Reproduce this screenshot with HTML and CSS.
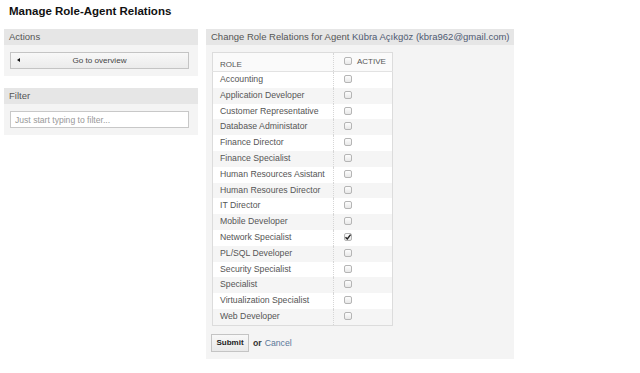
FILE: index.html
```html
<!DOCTYPE html>
<html lang="tr">
<head>
    <meta charset="UTF-8">
    <meta name="viewport" content="width=device-width, initial-scale=1.0">
    <title>Manage Role-Agent Relations</title>
    <link rel="stylesheet" href="styles.css">
</head>
<body>
    <h1 class="page-title">Manage Role-Agent Relations</h1>
    <div class="layout">
        <div class="sidebar">
            <div class="box">
                <h2 class="box-header">Actions</h2>
                <div class="box-content actions">
                    <button class="btn-overview"><span class="arrow"></span>Go to overview</button>
                </div>
            </div>
            <div class="box filter-box">
                <h2 class="box-header">Filter</h2>
                <div class="box-content filter">
                    <input type="text" class="filter-input" placeholder="Just start typing to filter...">
                </div>
            </div>
        </div>
        <div class="main box">
            <h2 class="box-header">Change Role Relations for Agent <a class="agent-link" href="#">Kübra Açıkgöz (kbra962@gmail.com)</a></h2>
            <div class="box-content main-content">
                <table class="relations">
                    <thead>
                        <tr>
                            <th class="col-role">ROLE</th>
                            <th class="col-active"><span class="check"></span>ACTIVE</th>
                        </tr>
                    </thead>
                    <tbody>
                        <tr><td>Accounting</td><td class="cell-check"><span class="check"></span></td></tr>
                        <tr><td>Application Developer</td><td class="cell-check"><span class="check"></span></td></tr>
                        <tr><td>Customer Representative</td><td class="cell-check"><span class="check"></span></td></tr>
                        <tr><td>Database Administator</td><td class="cell-check"><span class="check"></span></td></tr>
                        <tr><td>Finance Director</td><td class="cell-check"><span class="check"></span></td></tr>
                        <tr><td>Finance Specialist</td><td class="cell-check"><span class="check"></span></td></tr>
                        <tr><td>Human Resources Asistant</td><td class="cell-check"><span class="check"></span></td></tr>
                        <tr><td>Human Resoures Director</td><td class="cell-check"><span class="check"></span></td></tr>
                        <tr><td>IT Director</td><td class="cell-check"><span class="check"></span></td></tr>
                        <tr><td>Mobile Developer</td><td class="cell-check"><span class="check"></span></td></tr>
                        <tr><td>Network Specialist</td><td class="cell-check"><span class="check checked"><svg viewBox="0 0 8 8" width="8" height="8"><path d="M1.5 4.2 L3.3 6 L6.6 1.6" fill="none" stroke="#222" stroke-width="1.4"/></svg></span></td></tr>
                        <tr><td>PL/SQL Developer</td><td class="cell-check"><span class="check"></span></td></tr>
                        <tr><td>Security Specialist</td><td class="cell-check"><span class="check"></span></td></tr>
                        <tr><td>Specialist</td><td class="cell-check"><span class="check"></span></td></tr>
                        <tr><td>Virtualization Specialist</td><td class="cell-check"><span class="check"></span></td></tr>
                        <tr><td>Web Developer</td><td class="cell-check"><span class="check"></span></td></tr>
                    </tbody>
                </table>
                <div class="form-actions">
                    <button class="btn-submit">Submit</button>
                    <span class="or">or</span>
                    <a class="cancel" href="#">Cancel</a>
                </div>
            </div>
        </div>
    </div>
</body>
</html>
```

FILE: styles.css
```css
body {
    margin: 0;
    background-color: #ffffff;
    font-family: "Liberation Sans", Arial, sans-serif;
    color: #555;
}
.page-title {
    margin: 4px 0 11px 9px;
    font-size: 11.5px;
    line-height: 14px;
    font-weight: bold;
    color: #111;
}
.layout {
    display: flex;
    align-items: flex-start;
    gap: 8px;
    padding-left: 4px;
}
.sidebar {
    width: 194px;
}
.box {
    background-color: #f4f4f4;
}
.filter-box {
    margin-top: 12px;
}
.box-header {
    margin: 0;
    height: 16px;
    line-height: 16px;
    padding-left: 5px;
    background-color: #e6e6e6;
    font-size: 9.5px;
    font-weight: normal;
    color: #555;
}
.actions {
    padding: 7px 9px 7px 6px;
}
.btn-overview {
    display: block;
    position: relative;
    width: 179px;
    height: 17px;
    padding: 0;
    border: 1px solid #c4c4c4;
    background: linear-gradient(#f8f8f8, #ebebeb);
    font-family: inherit;
    font-size: 8.1px;
    color: #444;
}
.arrow {
    position: absolute;
    left: 6px;
    top: 5px;
    width: 0;
    height: 0;
    border-top: 2.5px solid transparent;
    border-bottom: 2.5px solid transparent;
    border-right: 3px solid #111;
}
.filter {
    padding: 7px 9px 7px 6px;
}
.filter-input {
    display: block;
    box-sizing: border-box;
    width: 179px;
    height: 17px;
    margin: 0;
    padding: 0 4px;
    border: 1px solid #c8c8c8;
    background: #fff;
    font-family: inherit;
    font-size: 8.6px;
}
.filter-input::placeholder {
    color: #999;
}
.main {
    width: 308px;
}
.agent-link {
    color: #4f5a72;
    text-decoration: none;
}
.main-content {
    padding: 7px 6px 7px 6px;
}
.relations {
    width: 181px;
    table-layout: fixed;
    border-collapse: collapse;
    border: 1px solid #dcdcdc;
    font-size: 8.7px;
    color: #555;
}
.relations th {
    height: 19px;
    padding: 0;
    box-sizing: border-box;
    background-color: #fafafa;
    font-weight: normal;
    font-size: 8px;
    line-height: 10px;
    text-align: left;
    color: #555;
    border-bottom: 1px solid #e2e2e2;
}
.col-role {
    width: 121px;
    padding-left: 7px !important;
    padding-bottom: 1px !important;
    vertical-align: bottom;
}
.col-active {
    padding-left: 10px !important;
    padding-top: 4px !important;
    vertical-align: top;
    border-left: 1px dotted #d6d6d6;
}
.col-active .check {
    margin-right: 5px;
    vertical-align: -1px;
}
.relations td {
    height: 15.8px;
    padding: 0 0 0 7px;
    line-height: 15.8px;
    box-sizing: border-box;
    white-space: nowrap;
}
.relations td.cell-check {
    padding-left: 10px;
    border-left: 1px dotted #d6d6d6;
}
.relations tbody tr:nth-child(odd) {
    background-color: #ffffff;
}
.relations tbody tr:nth-child(even) {
    background-color: #f5f5f5;
}
.check {
    display: inline-block;
    box-sizing: border-box;
    width: 8px;
    height: 8px;
    border: 1px solid #b5b5b5;
    border-radius: 2px;
    background: linear-gradient(#fdfdfd, #e8e8e8);
    vertical-align: -1px;
    position: relative;
}
.check svg {
    position: absolute;
    left: -1px;
    top: -1px;
}
.form-actions {
    display: flex;
    align-items: center;
    gap: 4px;
    margin-top: 8px;
}
.btn-submit {
    width: 38px;
    height: 18px;
    padding: 0;
    margin-left: -1px;
    border: 1px solid #c4c4c4;
    background: linear-gradient(#f8f8f8, #e9e9e9);
    font-family: inherit;
    font-size: 8px;
    font-weight: bold;
    color: #222;
}
.or {
    font-size: 8.7px;
    font-weight: bold;
    color: #333;
}
.cancel {
    margin-left: -1px;
    font-size: 8.7px;
    color: #5a7799;
    text-decoration: none;
}
```
